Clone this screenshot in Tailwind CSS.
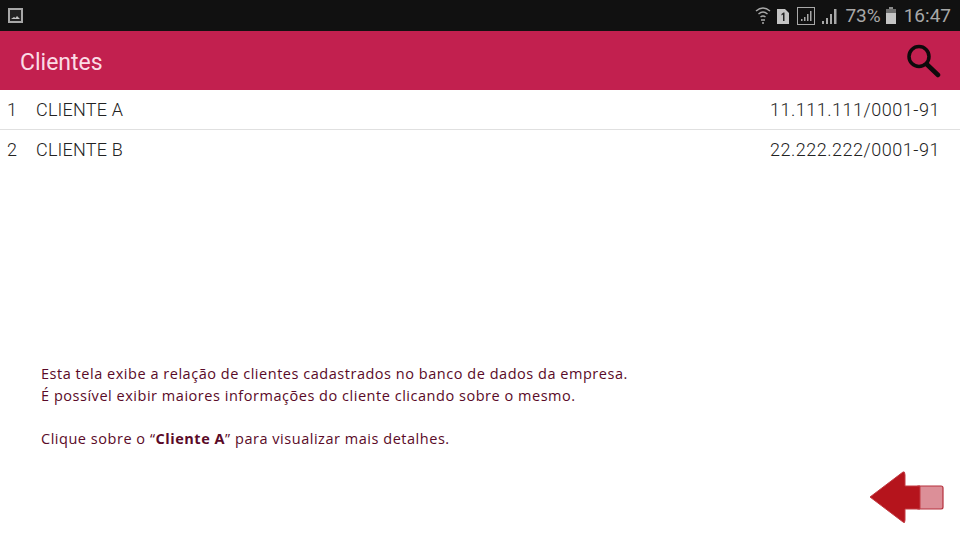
<!DOCTYPE html>
<html lang="en">
<head>
  <meta charset="UTF-8" />
  <title>Clientes</title>
  <script src="https://cdn.jsdelivr.net/npm/@tailwindcss/browser@4"></script>
</head>
<body class="bg-white font-['Roboto',sans-serif] w-[960px] h-[540px] overflow-hidden flex flex-col">
  <!-- Status bar -->
  <div class="h-[31px] bg-[#111111] flex items-center justify-between pl-[8px] pr-[9px] text-[#a8a8a8]">
    <svg width="15" height="15" viewBox="0 0 15 15">
      <rect x="1" y="1" width="13" height="13" fill="#222" stroke="#a8a8a8" stroke-width="2" />
      <path d="M3 11 L6 9 L7.5 10 L9 8 L12 11 Z" fill="#c4c4c4" />
    </svg>
    <div class="flex items-center">
      <svg width="16" height="20" viewBox="0 0 16 20" fill="none" stroke="#a8a8a8" stroke-width="1.4">
        <path d="M1 5 Q8 -1 15 5" />
        <path d="M3.5 8 Q8 4 12.5 8" />
        <path d="M5.5 11 Q8 9 10.5 11" />
        <path d="M6 14 L10 14 M7 17 L9 17" />
      </svg>
      <svg class="ml-[6px]" width="12" height="16" viewBox="0 0 12 16">
        <path d="M0 1 H8 L12 5 V16 H0 Z" fill="#c4c4c4" />
        <path d="M4.5 6 L6.5 4.5 H7.5 V13 H6 V6.5 L4.5 7.5 Z" fill="#222" />
      </svg>
      <svg class="ml-[8px]" width="18" height="18" viewBox="0 0 18 18" fill="#a8a8a8">
        <rect x="0.5" y="0.5" width="17" height="17" fill="none" stroke="#a8a8a8" />
        <rect x="4" y="12" width="1.5" height="2" />
        <rect x="7" y="10" width="1.5" height="4" />
        <rect x="10" y="7" width="1.5" height="7" />
        <rect x="13" y="4" width="1.5" height="10" />
      </svg>
      <svg class="ml-[7px]" width="15" height="16" viewBox="0 0 15 16" fill="#a8a8a8">
        <rect x="0" y="13" width="2" height="3" />
        <rect x="4" y="10" width="2" height="6" />
        <rect x="8" y="6" width="2" height="10" />
        <rect x="12" y="1" width="2.5" height="15" />
      </svg>
      <span class="ml-[8px] text-[19px] leading-none">73%</span>
      <svg class="ml-[5px]" width="10" height="17" viewBox="0 0 10 17">
        <rect x="3" y="0" width="4" height="2" fill="#8a8a8a" />
        <rect x="0" y="2" width="10" height="15" fill="#c4c4c4" />
        <rect x="0" y="2" width="10" height="4" fill="#6e6e6e" />
      </svg>
      <span class="ml-[8px] text-[19px] leading-none">16:47</span>
    </div>
  </div>

  <!-- Header -->
  <div class="h-[59px] bg-[#c2204f] flex items-center justify-between pl-[20px] pr-[19px]">
    <span class="text-[23px] text-[#fbdce6] leading-none pt-[3px]">Clientes</span>
    <svg width="36" height="36" viewBox="0 0 36 36" fill="none" stroke="#0d0a0b" stroke-linecap="round">
      <circle cx="14" cy="13.5" r="10" stroke-width="3.5" />
      <path d="M22 21.5 L33 32" stroke-width="4.5" />
    </svg>
  </div>

  <!-- Client rows -->
  <div class="h-[40px] flex items-center border-b border-[#e0e0e0] text-[18px] font-light text-[#222222] pl-[7px] pr-[20px]">
    <span class="w-[29px]">1</span>
    <span class="tracking-[0.2px]">CLIENTE A</span>
    <span class="ml-auto tracking-[0.52px]">11.111.111/0001-91</span>
  </div>
  <div class="h-[38px] flex items-center text-[18px] font-light text-[#222222] pl-[7px] pr-[20px]">
    <span class="w-[29px]">2</span>
    <span class="tracking-[0.2px]">CLIENTE B</span>
    <span class="ml-auto tracking-[0.52px]">22.222.222/0001-91</span>
  </div>

  <!-- Caption -->
  <div class="mt-[195px] pl-[41px] font-['Open_Sans',sans-serif] text-[14.5px] tracking-[0.53px] leading-[21.5px] text-[#5a0a28]">
    <p>Esta tela exibe a relação de clientes cadastrados no banco de dados da empresa.</p>
    <p>É possível exibir maiores informações do cliente clicando sobre o mesmo.</p>
    <p class="mt-[21.5px]">Clique sobre o “<b>Cliente A</b>” para visualizar mais detalhes.</p>
  </div>

  <!-- Back arrow -->
  <div class="mt-[21px] flex justify-end pr-[16px]">
    <svg width="76" height="54" viewBox="0 0 76 54">
      <path d="M50 16 H73 Q75 16 75 18 V37 Q75 39 73 39 H50 Z" fill="#dc8f98" stroke="#b5303c" stroke-width="1.2" />
      <path d="M2 27 L35 2 Q37 1 37 5 V16 H52 V39 H37 V50 Q37 54 35 52 Z" fill="#b5141c" stroke="#c23a42" stroke-width="1" stroke-linejoin="round" />
    </svg>
  </div>
</body>
</html>
